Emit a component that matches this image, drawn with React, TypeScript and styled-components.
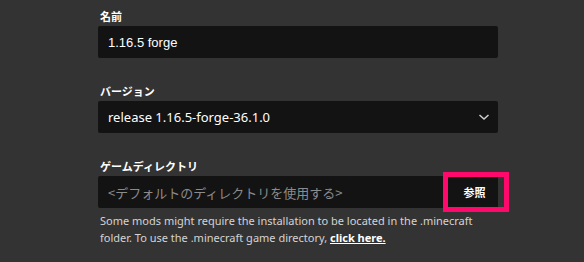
import React from "react";
import styled, { createGlobalStyle } from "styled-components";

const Global = createGlobalStyle`
  html, body { margin: 0; padding: 0; background: #333333; }
  body { width: 584px; height: 262px; overflow: hidden; font-family: "Noto Sans", "Noto Sans CJK JP", sans-serif; }
`;

const Page = styled.div`
  width: 584px;
  height: 262px;
  background: #333333;
  box-sizing: border-box;
  padding: 8px 86px 0 98px;
  display: flex;
  flex-direction: column;
  gap: 25px;
`;

const Field = styled.div`
  display: flex;
  flex-direction: column;
  gap: 2px;
  position: relative;
`;

const Label = styled.div`
  font-family: "Noto Sans CJK JP", "Noto Sans", sans-serif;
  font-weight: 700;
  font-size: 11px;
  line-height: 16px;
  color: #ffffff;
  padding-left: 2px;
`;

const Box = styled.div`
  height: 32px;
  background: #131313;
  border-radius: 2px;
  display: flex;
  align-items: center;
  box-sizing: border-box;
  padding-left: 10px;
`;

const Value = styled.span<{ $font: string }>`
  font-family: ${(p) => p.$font};
  font-size: 13px;
  color: #ffffff;
  flex: 1;
`;

const Placeholder = styled.span`
  font-family: "Noto Sans CJK JP", "Noto Sans", sans-serif;
  font-size: 13px;
  color: #8b8b8b;
  flex: 1;
`;

const Chevron = styled.svg`
  width: 12px;
  height: 8px;
  margin-right: 8px;
`;

const BrowseButton = styled.button`
  width: 49px;
  height: 32px;
  border: none;
  background: #131313;
  color: #ffffff;
  font-family: "Noto Sans CJK JP", sans-serif;
  font-weight: 700;
  font-size: 11px;
  padding: 0 0 0 2px;
  margin-left: auto;
  border-radius: 0 2px 2px 0;
`;

const Highlight = styled.div`
  position: absolute;
  left: 345px;
  top: 14px;
  width: 66px;
  height: 40px;
  box-sizing: border-box;
  border: 5px solid #ff0a6c;
  pointer-events: none;
`;

const Help = styled.p`
  margin: 2px 0 0;
  padding-left: 2px;
  font-family: "Noto Sans", sans-serif;
  font-size: 11px;
  line-height: 17px;
  color: #d4d4d4;
`;

const Link = styled.a`
  color: #ffffff;
  font-weight: 700;
  text-decoration: underline;
`;

export default function App() {
  return (
    <>
      <Global />
      <Page>
        <Field>
          <Label>名前</Label>
          <Box>
            <Value $font={`"Liberation Sans", Arial, sans-serif`}>1.16.5 forge</Value>
          </Box>
        </Field>
        <Field>
          <Label>バージョン</Label>
          <Box>
            <Value $font={`"Noto Sans", sans-serif`}>release 1.16.5-forge-36.1.0</Value>
            <Chevron viewBox="0 0 12 8">
              <path d="M1.5 2 L6 6 L10.5 2" fill="none" stroke="#d0d0d0" strokeWidth="1.5" />
            </Chevron>
          </Box>
        </Field>
        <Field>
          <Label>ゲームディレクトリ</Label>
          <Box>
            <Placeholder>&lt;デフォルトのディレクトリを使用する&gt;</Placeholder>
            <BrowseButton>参照</BrowseButton>
          </Box>
          <Highlight />
          <Help>
            Some mods might require the installation to be located in the .minecraft folder. To use the .minecraft game directory, <Link>click here.</Link>
          </Help>
        </Field>
      </Page>
    </>
  );
}
